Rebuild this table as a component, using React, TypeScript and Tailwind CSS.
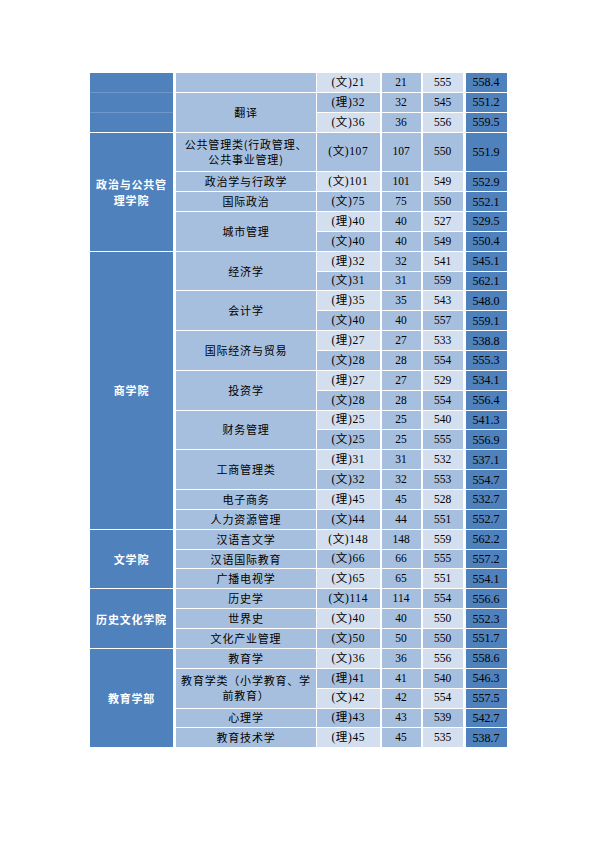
import * as React from "react";

type Row = {
  lead?: "first" | "line";
  college?: { name: string[]; span: string };
  major?: { name: string[]; span: string };
  kind: "文" | "理";
  plan: number;
  low: number;
  avg: string;
  tall?: boolean;
};

const ROWS: Row[] = [
  { lead: "first", major: { name: [], span: "" }, kind: "文", plan: 21, low: 555, avg: "558.4" },
  { lead: "line", major: { name: ["翻译"], span: "row-span-2" }, kind: "理", plan: 32, low: 545, avg: "551.2" },
  { lead: "line", kind: "文", plan: 36, low: 556, avg: "559.5" },
  {
    college: { name: ["政治与公共管", "理学院"], span: "row-span-6" },
    major: { name: ["公共管理类(行政管理、", "公共事业管理)"], span: "row-span-2" },
    kind: "文", plan: 107, low: 550, avg: "551.9", tall: true,
  },
  { major: { name: ["政治学与行政学"], span: "" }, kind: "文", plan: 101, low: 549, avg: "552.9" },
  { major: { name: ["国际政治"], span: "" }, kind: "文", plan: 75, low: 550, avg: "552.1" },
  { major: { name: ["城市管理"], span: "row-span-2" }, kind: "理", plan: 40, low: 527, avg: "529.5" },
  { kind: "文", plan: 40, low: 549, avg: "550.4" },
  {
    college: { name: ["商学院"], span: "row-span-14" },
    major: { name: ["经济学"], span: "row-span-2" },
    kind: "理", plan: 32, low: 541, avg: "545.1",
  },
  { kind: "文", plan: 31, low: 559, avg: "562.1" },
  { major: { name: ["会计学"], span: "row-span-2" }, kind: "理", plan: 35, low: 543, avg: "548.0" },
  { kind: "文", plan: 40, low: 557, avg: "559.1" },
  { major: { name: ["国际经济与贸易"], span: "row-span-2" }, kind: "理", plan: 27, low: 533, avg: "538.8" },
  { kind: "文", plan: 28, low: 554, avg: "555.3" },
  { major: { name: ["投资学"], span: "row-span-2" }, kind: "理", plan: 27, low: 529, avg: "534.1" },
  { kind: "文", plan: 28, low: 554, avg: "556.4" },
  { major: { name: ["财务管理"], span: "row-span-2" }, kind: "理", plan: 25, low: 540, avg: "541.3" },
  { kind: "文", plan: 25, low: 555, avg: "556.9" },
  { major: { name: ["工商管理类"], span: "row-span-2" }, kind: "理", plan: 31, low: 532, avg: "537.1" },
  { kind: "文", plan: 32, low: 553, avg: "554.7" },
  { major: { name: ["电子商务"], span: "" }, kind: "理", plan: 45, low: 528, avg: "532.7" },
  { major: { name: ["人力资源管理"], span: "" }, kind: "文", plan: 44, low: 551, avg: "552.7" },
  {
    college: { name: ["文学院"], span: "row-span-3" },
    major: { name: ["汉语言文学"], span: "" },
    kind: "文", plan: 148, low: 559, avg: "562.2",
  },
  { major: { name: ["汉语国际教育"], span: "" }, kind: "文", plan: 66, low: 555, avg: "557.2" },
  { major: { name: ["广播电视学"], span: "" }, kind: "文", plan: 65, low: 551, avg: "554.1" },
  {
    college: { name: ["历史文化学院"], span: "row-span-3" },
    major: { name: ["历史学"], span: "" },
    kind: "文", plan: 114, low: 554, avg: "556.6",
  },
  { major: { name: ["世界史"], span: "" }, kind: "文", plan: 40, low: 550, avg: "552.3" },
  { major: { name: ["文化产业管理"], span: "" }, kind: "文", plan: 50, low: 550, avg: "551.7" },
  {
    college: { name: ["教育学部"], span: "row-span-5" },
    major: { name: ["教育学"], span: "" },
    kind: "文", plan: 36, low: 556, avg: "558.6",
  },
  { major: { name: ["教育学类（小学教育、学", "前教育）"], span: "row-span-2" }, kind: "理", plan: 41, low: 540, avg: "546.3" },
  { kind: "文", plan: 42, low: 554, avg: "557.5" },
  { major: { name: ["心理学"], span: "" }, kind: "理", plan: 43, low: 539, avg: "542.7" },
  { major: { name: ["教育技术学"], span: "" }, kind: "理", plan: 45, low: 535, avg: "538.7" },
];

const CJK = "font-['Noto_Sans_CJK_SC',sans-serif]";
const NUM = "font-['Liberation_Serif','Noto_Sans_CJK_SC',serif]";
const CELL = "flex items-center justify-center text-center text-black";

function Lines({ lines }: { lines: string[] }) {
  return (
    <span>
      {lines.map((l, i) => (
        <React.Fragment key={i}>
          {i > 0 ? <br /> : null}
          {l}
        </React.Fragment>
      ))}
    </span>
  );
}

export default function App() {
  return (
    <div className="min-h-[841px] w-[595px] bg-white pl-[90px] pt-[72px]">
      <div className="grid w-[416.5px] grid-cols-[83px_143px_63.5px_41px_42px_44px] grid-rows-[repeat(34,19.86px)]">
        {ROWS.map((r, i) => {
          const band = i % 2 === 0 ? "bg-[#d3dfee]" : "bg-[#a7bfde]";
          const tall = r.tall ? "row-span-2" : "";
          return (
            <React.Fragment key={i}>
              {r.lead === "first" ? <div className="mt-px bg-[#4f81bd]" /> : null}
              {r.lead === "line" ? <div className="border-t border-[#7097c9] bg-[#4f81bd]" /> : null}
              {r.college ? (
                <div
                  className={`${r.college.span} ${CJK} mt-px flex items-center justify-center bg-[#4f81bd] text-center text-[11px] font-bold leading-[16px] tracking-[0.8px] text-white`}
                >
                  <Lines lines={r.college.name} />
                </div>
              ) : null}
              {r.major ? (
                <div
                  className={`${r.major.span} ${CJK} ${CELL} mt-px ml-[3px] bg-[#a7bfde] text-[11px] leading-[15px] tracking-[0.8px]`}
                >
                  <Lines lines={r.major.name} />
                </div>
              ) : null}
              <div className={`${tall} ${NUM} ${CELL} ${band} mt-px ml-px text-[11.5px] tracking-[0.6px]`}>
                ({r.kind}){r.plan}
              </div>
              <div className={`${tall} ${NUM} ${CELL} mt-px ml-[2px] bg-[#a7bfde] text-[11.5px]`}>{r.plan}</div>
              <div className={`${tall} ${NUM} ${CELL} ${band} mt-px ml-[2px] text-[11.5px]`}>{r.low}</div>
              <div className={`${tall} ${NUM} ${CELL} mt-px ml-[3px] bg-[#4f81bd] text-[12px]`}>{r.avg}</div>
            </React.Fragment>
          );
        })}
      </div>
    </div>
  );
}
